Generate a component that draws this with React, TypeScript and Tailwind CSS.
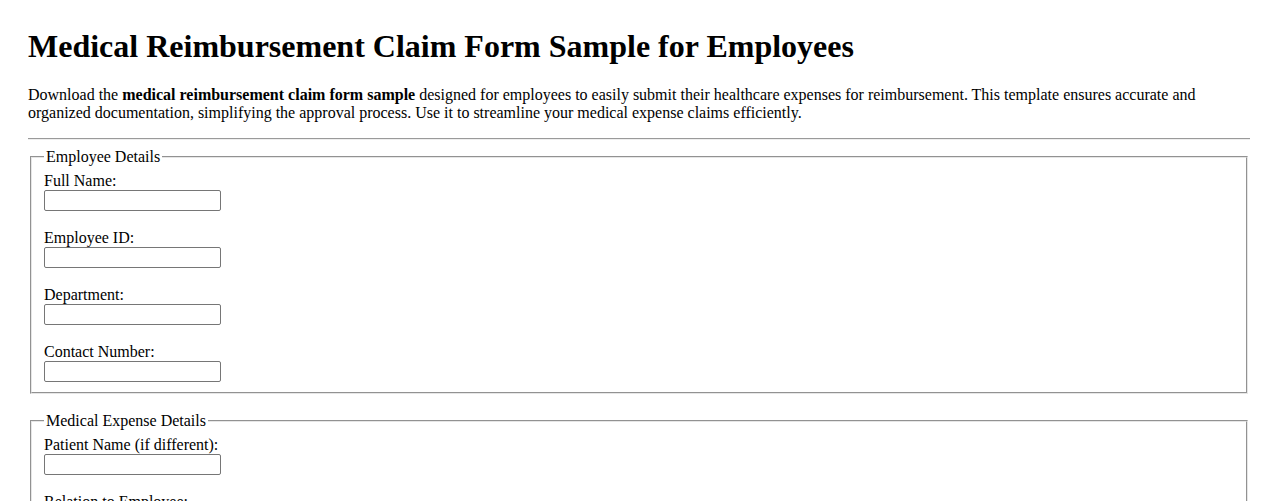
import React from "react";

interface Field {
  id: string;
  label: string;
}

interface Section {
  title: string;
  fields: Field[];
}

const sections: Section[] = [
  {
    title: "Employee Details",
    fields: [
      { id: "fullName", label: "Full Name:" },
      { id: "employeeId", label: "Employee ID:" },
      { id: "department", label: "Department:" },
      { id: "contactNumber", label: "Contact Number:" },
    ],
  },
  {
    title: "Medical Expense Details",
    fields: [
      { id: "patientName", label: "Patient Name (if different):" },
      { id: "relation", label: "Relation to Employee:" },
      { id: "treatmentDate", label: "Date of Treatment:" },
      { id: "hospital", label: "Hospital/Clinic Name:" },
      { id: "diagnosis", label: "Diagnosis:" },
      { id: "amount", label: "Total Amount Claimed:" },
    ],
  },
];

function FormSection({ section }: { section: Section }) {
  return (
    <fieldset className="mx-0.5 border-2 [border-style:groove] border-[#e6e6e6] px-3 pt-[5.6px] pb-[10px]">
      <legend className="px-0.5">{section.title}</legend>
      {section.fields.map((f, i) => (
        <div
          key={f.id}
          className={i < section.fields.length - 1 ? "mb-[18px]" : ""}
        >
          <label htmlFor={f.id} className="block">
            {f.label}
          </label>
          <input
            id={f.id}
            type="text"
            className="block w-[177px] h-[21px] border border-[#767676] rounded-[2px] bg-white px-0.5 text-[13.33px]"
          />
        </div>
      ))}
    </fieldset>
  );
}

export default function App() {
  return (
    <div className="min-h-screen bg-white text-black px-[28px] pt-[28px] pb-8 font-['Liberation_Serif','Times_New_Roman',serif] text-[16px] leading-[normal]">
      <h1 className="text-[32px] font-bold mb-[21.44px]">
        Medical Reimbursement Claim Form Sample for Employees
      </h1>
      <p className="mb-4">
        Download the <strong className="font-bold">medical reimbursement claim form sample</strong>{" "}
        designed for employees to easily submit their healthcare expenses for
        reimbursement. This template ensures accurate and organized
        documentation, simplifying the approval process. Use it to streamline
        your medical expense claims efficiently.
      </p>
      <hr className="my-2 border-t border-t-[#9a9a9a] border-b border-b-[#eeeeee]" />
      <form>
        <FormSection section={sections[0]} />
        <div className="h-[18.4px]" />
        <FormSection section={sections[1]} />
      </form>
    </div>
  );
}
